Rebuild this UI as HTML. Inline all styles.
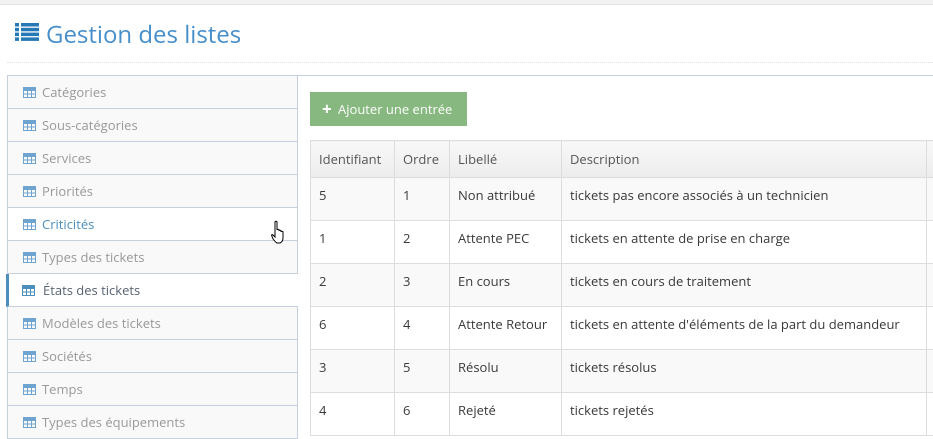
<!DOCTYPE html>
<html><head><meta charset="utf-8"><style>
*{box-sizing:border-box;margin:0;padding:0}
body{width:933px;height:436px;overflow:hidden;background:#fff;font-family:"Open Sans","Liberation Sans",sans-serif;font-size:13px;color:#393939;position:relative}
.top{position:absolute;left:0;top:0;width:933px;height:5px;background:#f2f2f2;border-bottom:1px solid #e2e2e2}
h1{position:absolute;left:46px;top:18px;font-weight:normal;font-size:24px;color:#478fca;letter-spacing:0}
.ico{position:absolute;left:15px;top:23px}
.dot{position:absolute;left:7px;right:0;top:62px;border-top:1px dotted #e2e2e2}
.side{position:absolute;left:7px;top:75px;width:291px}
.it{height:33px;border:1px solid #c5d0dc;border-top:none;background:#f9f9f9;color:#999;padding-left:34px;line-height:32px;position:relative;font-size:13px}
.it:first-child{border-top:1px solid #c5d0dc;height:34px;line-height:33px}
.it svg{position:absolute;left:15px;top:11px}
.it.h{background:#fff;color:#4c8fbd}
.it.a{background:#fff;color:#576373;border-left:3px solid #4c8fbd;margin-left:-1px;width:292px;border-right:none;padding-left:34px}
.content{position:absolute;left:297px;top:75px;right:0;height:361px;border-top:1px solid #c5d0dc;border-left:1px solid #c5d0dc}
.btn{position:absolute;left:310px;top:92px;width:157px;height:34px;background:#87b87f;color:#fff;font-size:13px;line-height:34px;padding-left:28px}
.btn b{position:absolute;left:12px;top:0;font-size:17px}
table{position:absolute;left:310px;top:140px;border-collapse:collapse;width:640px}
td,th{border:1px solid #ddd;text-align:left;font-weight:normal;padding-left:8px;height:43px;color:#393939}
td{vertical-align:top;padding-top:8px}
th{height:37px;background:linear-gradient(#f8f8f8,#ececec);color:#555}
tr:nth-child(even) td{background:#f9f9f9}
</style></head><body>
<div class="top"></div>
<svg class="ico" width="24" height="18" viewBox="0 0 24 18" fill="#2679b5"><rect x="0" y="0" width="4" height="3.5"/><rect x="6" y="0" width="18" height="3.5"/><rect x="0" y="4.8" width="4" height="3.5"/><rect x="6" y="4.8" width="18" height="3.5"/><rect x="0" y="9.6" width="4" height="3.5"/><rect x="6" y="9.6" width="18" height="3.5"/><rect x="0" y="14.4" width="4" height="3.5"/><rect x="6" y="14.4" width="18" height="3.5"/></svg>
<h1>Gestion des listes</h1>
<div class="dot"></div>
<div class="content"></div>
<div class="side">
<div class="it"><svg width="13" height="11"><g fill="none" stroke="#6fa3d0" stroke-width="1"><rect x=".5" y=".5" width="12" height="10"/><path d="M.5 3.5h12M.5 7h12M4.5 .5v10M8.5 .5v10"/></g><rect x="0" y="0" width="13" height="3" fill="#6fa3d0"/></svg>Catégories</div>
<div class="it"><svg width="13" height="11"><g fill="none" stroke="#6fa3d0"><rect x=".5" y=".5" width="12" height="10"/><path d="M.5 3.5h12M.5 7h12M4.5 .5v10M8.5 .5v10"/></g><rect width="13" height="3" fill="#6fa3d0"/></svg>Sous-catégories</div>
<div class="it"><svg width="13" height="11"><g fill="none" stroke="#6fa3d0"><rect x=".5" y=".5" width="12" height="10"/><path d="M.5 3.5h12M.5 7h12M4.5 .5v10M8.5 .5v10"/></g><rect width="13" height="3" fill="#6fa3d0"/></svg>Services</div>
<div class="it"><svg width="13" height="11"><g fill="none" stroke="#6fa3d0"><rect x=".5" y=".5" width="12" height="10"/><path d="M.5 3.5h12M.5 7h12M4.5 .5v10M8.5 .5v10"/></g><rect width="13" height="3" fill="#6fa3d0"/></svg>Priorités</div>
<div class="it h"><svg width="13" height="11"><g fill="none" stroke="#6fa3d0"><rect x=".5" y=".5" width="12" height="10"/><path d="M.5 3.5h12M.5 7h12M4.5 .5v10M8.5 .5v10"/></g><rect width="13" height="3" fill="#6fa3d0"/></svg>Criticités</div>
<div class="it"><svg width="13" height="11"><g fill="none" stroke="#6fa3d0"><rect x=".5" y=".5" width="12" height="10"/><path d="M.5 3.5h12M.5 7h12M4.5 .5v10M8.5 .5v10"/></g><rect width="13" height="3" fill="#6fa3d0"/></svg>Types des tickets</div>
<div class="it a"><svg width="13" height="11" style="left:13px"><g fill="none" stroke="#4c8fbd"><rect x=".5" y=".5" width="12" height="10"/><path d="M.5 3.5h12M.5 7h12M4.5 .5v10M8.5 .5v10"/></g><rect width="13" height="3" fill="#4c8fbd"/></svg>États des tickets</div>
<div class="it"><svg width="13" height="11"><g fill="none" stroke="#6fa3d0"><rect x=".5" y=".5" width="12" height="10"/><path d="M.5 3.5h12M.5 7h12M4.5 .5v10M8.5 .5v10"/></g><rect width="13" height="3" fill="#6fa3d0"/></svg>Modèles des tickets</div>
<div class="it"><svg width="13" height="11"><g fill="none" stroke="#6fa3d0"><rect x=".5" y=".5" width="12" height="10"/><path d="M.5 3.5h12M.5 7h12M4.5 .5v10M8.5 .5v10"/></g><rect width="13" height="3" fill="#6fa3d0"/></svg>Sociétés</div>
<div class="it"><svg width="13" height="11"><g fill="none" stroke="#6fa3d0"><rect x=".5" y=".5" width="12" height="10"/><path d="M.5 3.5h12M.5 7h12M4.5 .5v10M8.5 .5v10"/></g><rect width="13" height="3" fill="#6fa3d0"/></svg>Temps</div>
<div class="it"><svg width="13" height="11"><g fill="none" stroke="#6fa3d0"><rect x=".5" y=".5" width="12" height="10"/><path d="M.5 3.5h12M.5 7h12M4.5 .5v10M8.5 .5v10"/></g><rect width="13" height="3" fill="#6fa3d0"/></svg>Types des équipements</div>
</div>
<svg style="position:absolute;left:270px;top:220px" width="18" height="24" viewBox="0 0 18 24"><path d="M5 2c0-1 2-1 2 0v8c0-1 2-1 2 0v1c0-1 2-1 2 0v1c0-1 2-1 2 0v6c0 2-1 4-3 5H7c-2-1-5-5-5-7-1-1 0-2 1-1l2 2z" fill="#fff" stroke="#000" stroke-width="1"/></svg>
<div class="btn"><b>+</b>Ajouter une entrée</div>
<table>
<tr><th style="width:84px">Identifiant</th><th style="width:55px">Ordre</th><th style="width:112px">Libellé</th><th style="width:365px">Description</th><th></th></tr>
<tr><td>5</td><td>1</td><td>Non attribué</td><td>tickets pas encore associés à un technicien</td><td></td></tr>
<tr><td>1</td><td>2</td><td>Attente PEC</td><td>tickets en attente de prise en charge</td><td></td></tr>
<tr><td>2</td><td>3</td><td>En cours</td><td>tickets en cours de traitement</td><td></td></tr>
<tr><td>6</td><td>4</td><td>Attente Retour</td><td>tickets en attente d'éléments de la part du demandeur</td><td></td></tr>
<tr><td>3</td><td>5</td><td>Résolu</td><td>tickets résolus</td><td></td></tr>
<tr><td>4</td><td>6</td><td>Rejeté</td><td>tickets rejetés</td><td></td></tr>
</table>
</body></html>
